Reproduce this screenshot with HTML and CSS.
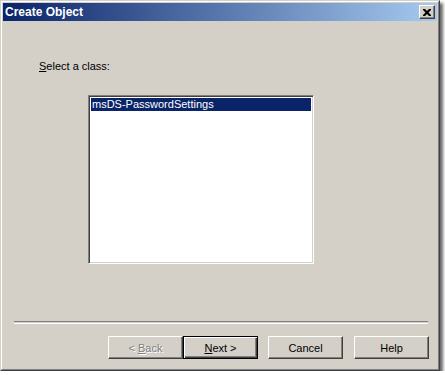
FILE: index.html
```html
<!DOCTYPE html>
<html lang="en">
<head>
    <meta charset="UTF-8">
    <meta name="viewport" content="width=device-width, initial-scale=1.0">
    <title>Create Object</title>
    <link rel="stylesheet" href="styles.css">
</head>
<body>
    <div class="window">
        <div class="frame">
            <div class="titlebar">
                <span class="title">Create Object</span>
                <button class="close" aria-label="Close">
                    <svg width="8" height="7" viewBox="0 0 8 7">
                        <path d="M0 0h2l2 2 2-2h2v1l-2.5 2.5 2.5 2.5v1h-2l-2-2-2 2h-2v-1l2.5-2.5-2.5-2.5z" fill="#000"/>
                    </svg>
                </button>
            </div>

            <div class="content">
                <label class="prompt" for="classList"><u>S</u>elect a class:</label>
                <div class="listbox" id="classList">
                    <div class="item selected">msDS-PasswordSettings</div>
                </div>

                <div class="separator"></div>

                <div class="buttons">
                    <div class="pair">
                        <button class="btn" disabled>&lt; <u>B</u>ack</button>
                        <button class="btn default"><u>N</u>ext &gt;</button>
                    </div>
                    <button class="btn">Cancel</button>
                    <button class="btn">Help</button>
                </div>
            </div>
        </div>
    </div>
</body>
</html>
```

FILE: styles.css
```css
body {
    margin: 0;
    background: #ffffff;
    font-family: "Liberation Sans", Arial, sans-serif;
    font-size: 11px;
}

/* Outer window with a soft drop shadow */
.window {
    width: 440px;
    height: 371px;
    box-sizing: border-box;
    border: 1px solid;
    border-color: #d4d0c8 #404040 #404040 #d4d0c8;
    background: #d4d0c8;
    box-shadow: 3px 3px 3px rgba(0, 0, 0, 0.6);
}

.frame {
    height: 100%;
    box-sizing: border-box;
    border: 1px solid;
    border-color: #ffffff #808080 #808080 #ffffff;
    padding: 1px;
    display: flex;
    flex-direction: column;
}

.titlebar {
    height: 18px;
    display: flex;
    align-items: center;
    justify-content: space-between;
    background: linear-gradient(to right, #0a246a, #a6caf0);
    padding: 0 2px 0 2px;
}

.title {
    color: #ffffff;
    font-weight: bold;
    font-size: 12px;
}

.close {
    width: 16px;
    height: 14px;
    padding: 0;
    display: flex;
    align-items: center;
    justify-content: center;
    background: #d4d0c8;
    border: 1px solid;
    border-color: #ffffff #404040 #404040 #ffffff;
    box-shadow: inset -1px -1px 0 #808080;
}

.content {
    flex: 1;
    display: flex;
    flex-direction: column;
    align-items: flex-start;
    padding-top: 39px;
}

.prompt {
    margin-left: 36px;
    line-height: 13px;
    color: #000000;
}

/* Sunken list box */
.listbox {
    margin-top: 22px;
    margin-left: 85px;
    width: 226px;
    height: 169px;
    box-sizing: border-box;
    background: #ffffff;
    border: 1px solid;
    border-color: #808080 #ffffff #ffffff #808080;
    box-shadow: inset 1px 1px 0 #404040, inset -1px -1px 0 #d4d0c8;
    padding: 2px 2px 2px 2px;
}

.item {
    height: 13px;
    line-height: 13px;
    padding-left: 1px;
}

.item.selected {
    background: #0a246a;
    color: #ffffff;
}

.separator {
    margin-top: 57px;
    margin-left: 11px;
    width: 414px;
    height: 1px;
    border-top: 1px solid #808080;
    border-bottom: 1px solid #ffffff;
}

.buttons {
    margin-top: 12px;
    align-self: stretch;
    display: flex;
    justify-content: flex-end;
    gap: 11px;
    padding-right: 8px;
}

.pair {
    display: flex;
    margin-right: -1px;
}

.btn {
    width: 75px;
    height: 23px;
    box-sizing: border-box;
    font-family: "Liberation Sans", Arial, sans-serif;
    font-size: 11px;
    color: #000000;
    background: #d4d0c8;
    border: 1px solid;
    border-color: #ffffff #404040 #404040 #ffffff;
    box-shadow: inset -1px -1px 0 #808080;
    padding: 0;
}

.btn:disabled {
    color: #808080;
    text-shadow: 1px 1px 0 #ffffff;
}

/* Default button gets a black frame */
.btn.default {
    border: 1px solid #000000;
    box-shadow: inset 1px 1px 0 #ffffff, inset -1px -1px 0 #404040, inset -2px -2px 0 #808080;
}
```
